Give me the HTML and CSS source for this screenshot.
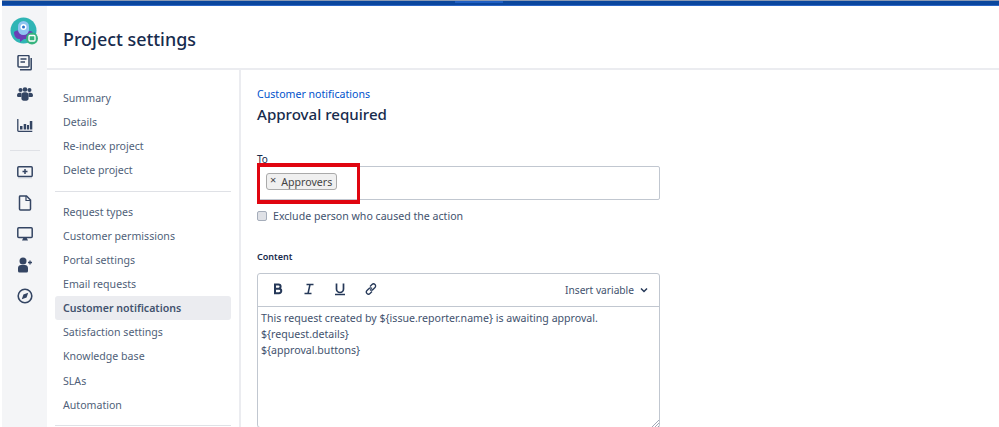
FILE: index.html
```
<!DOCTYPE html>
<html lang="en">
<head>
<meta charset="utf-8">
<title>Project settings</title>
<link rel="stylesheet" href="styles.css">
</head>
<body>
<div class="topbar"><div class="topbar-tab"></div></div>
<div class="app">
  <aside class="rail">
    <div class="logo">
      <svg width="30" height="30" viewBox="0 0 30 30">
        <circle cx="13.500" cy="13.500" r="13" fill="#2fb5b5"/>
        <path d="M4 15c3-2 5-1.500 7-1h9c2 0 3 1 3 3v2c0 2-1 3-3 3h-6l-4 3v-3H9c-3 0-5-3-5-7z" fill="#6a3fb5"/>
        <rect x="8" y="4" width="11" height="14" rx="5.500" fill="#8fc4f2"/>
        <circle cx="13.500" cy="10" r="3" fill="#fff"/>
        <circle cx="13.500" cy="10" r="1.500" fill="#2a6fc9"/>
        <circle cx="22" cy="21.500" r="6" fill="#36b37e"/>
        <rect x="19" y="18.500" width="6" height="5.500" rx="1" fill="none" stroke="#fff" stroke-width="1.300"/>
      </svg>
    </div>
    <div class="rail-group">
      <svg class="ico" viewBox="0 0 16 16"><path d="M1 1.500a1 1 0 0 1 1-1h9a1 1 0 0 1 1 1v9.500a1 1 0 0 1-1 1H2a1 1 0 0 1-1-1z" fill="none" stroke="#344563" stroke-width="1.500"/><path d="M3.500 4h6M3.500 7h4.500" stroke="#344563" stroke-width="1.500"/><path d="M14.200 3v11a.8.8 0 0 1-.8.8H3" fill="none" stroke="#344563" stroke-width="1.500"/></svg>
      <svg class="ico" viewBox="0 0 18 16"><circle cx="4" cy="3.500" r="2.300" fill="#344563"/><circle cx="14" cy="3.500" r="2.300" fill="#344563"/><circle cx="9" cy="3" r="2.600" fill="#344563"/><path d="M0 9.500c0-2.200 1.500-3 3-3h2v5H1.500C.5 11.500 0 10.800 0 9.500zM18 9.500c0-2.200-1.500-3-3-3h-2v5h3.500c1 0 1.500-.7 1.500-2z" fill="#344563"/><path d="M5 9c0-2 1.500-3 3-3h2c1.500 0 3 1 3 3v4c0 1.500-1 2.500-2.500 2.500h-3C6 15.500 5 14.500 5 13z" fill="#344563"/></svg>
      <svg class="ico" viewBox="0 0 16 16"><path d="M.8 2v11.500a.8.8 0 0 0 .8.800h13.700" fill="none" stroke="#344563" stroke-width="1.300"/><rect x="3" y="9" width="2.500" height="3.500" fill="#344563"/><rect x="6.700" y="7" width="2.500" height="5.500" fill="#344563"/><rect x="10" y="8" width="2" height="4.500" fill="#344563"/><rect x="12.800" y="4" width="2.500" height="8.500" fill="#344563"/></svg>
    </div>
    <hr class="rail-rule">
    <div class="rail-group second">
      <svg class="ico" viewBox="0 0 16 16"><rect x=".8" y="2.800" width="14.400" height="9.700" rx="1" fill="none" stroke="#344563" stroke-width="1.500"/><path d="M8 5v5M5.500 7.500h5" stroke="#344563" stroke-width="1.500"/><path d="M1 13.800h14" stroke="#c1c7d0"/></svg>
      <svg class="ico" viewBox="0 0 16 16"><path d="M3 1h6.500L13.500 5v9a1 1 0 0 1-1 1h-9a1 1 0 0 1-1-1V2a1 1 0 0 1 .500-1z" fill="none" stroke="#344563" stroke-width="1.500"/><path d="M9 1v4.500h4.500" fill="none" stroke="#344563" stroke-width="1.200"/></svg>
      <svg class="ico" viewBox="0 0 16 16"><rect x=".8" y="1.800" width="14.400" height="9.700" rx="1" fill="none" stroke="#344563" stroke-width="1.500"/><path d="M6.500 11.500h3l1.500 3H5z" fill="#344563"/></svg>
      <svg class="ico" viewBox="0 0 16 16"><circle cx="6" cy="4" r="3.500" fill="#344563"/><path d="M1 11c0-2 1.500-3 3-3h4c1.500 0 3 1 3 3v3a1.500 1.500 0 0 1-1.500 1.500h-7A1.500 1.500 0 0 1 1 14z" fill="#344563"/><path d="M13 3.500v4M11 5.500h4" stroke="#344563" stroke-width="1.300"/></svg>
      <svg class="ico" viewBox="0 0 16 16"><circle cx="8" cy="8" r="6.800" fill="none" stroke="#344563" stroke-width="1.600"/><path d="M11.200 4.800l-1.600 4.800-4.800 1.600 1.600-4.800z" fill="#344563"/></svg>
    </div>
  </aside>
  <div class="page">
    <header class="page-header"><h1 class="page-title">Project settings</h1></header>
    <div class="columns">
      <nav class="side-nav">
        <div class="nav-group">
          <a class="nav-item">Summary</a>
          <a class="nav-item">Details</a>
          <a class="nav-item">Re-index project</a>
          <a class="nav-item">Delete project</a>
        </div>
        <div class="nav-group">
          <a class="nav-item">Request types</a>
          <a class="nav-item">Customer permissions</a>
          <a class="nav-item">Portal settings</a>
          <a class="nav-item">Email requests</a>
          <a class="nav-item active">Customer notifications</a>
          <a class="nav-item">Satisfaction settings</a>
          <a class="nav-item">Knowledge base</a>
          <a class="nav-item">SLAs</a>
          <a class="nav-item">Automation</a>
        </div>
      </nav>
      <main class="content">
        <a class="crumb">Customer notifications</a>
        <h2 class="content-title">Approval required</h2>
        <label class="field-label to-label">To</label>
        <div class="to-field">
          <span class="tag"><span class="tag-x">×</span>Approvers</span>
          <div class="highlight"></div>
        </div>
        <label class="check-row"><span class="check"></span>Exclude person who caused the action</label>
        <div class="field-label bold">Content</div>
        <div class="editor">
          <div class="toolbar">
            <svg class="tool" viewBox="0 0 12 14"><path d="M3 2.500h3.500a2 2 0 0 1 0 4.200H3zM3 6.700h4a2.200 2.200 0 0 1 0 4.500H3z" fill="none" stroke="#253858" stroke-width="2"/></svg>
            <svg class="tool" viewBox="0 0 12 14"><path d="M3.500 2.500h7M1.500 11.500h7M7 2.500l-2 9" fill="none" stroke="#253858" stroke-width="1.500"/></svg>
            <svg class="tool" viewBox="0 0 12 14"><path d="M2.500 1.500v5.500a3.500 3.500 0 0 0 7 0V1.500" fill="none" stroke="#253858" stroke-width="1.700"/><path d="M1 12.500h10" stroke="#253858" stroke-width="1.500"/></svg>
            <svg class="tool" viewBox="0 0 12 14"><path d="M5 4.500l2-2a2 2 0 0 1 3 3l-2 2a2 2 0 0 1-3 0M7 9.500l-2 2a2 2 0 0 1-3-3l2-2a2 2 0 0 1 3 0" fill="none" stroke="#253858" stroke-width="1.300"/></svg>
            <span class="insert">Insert variable<svg class="chev" viewBox="0 0 8 6"><path d="M1 1.500l3 3 3-3" fill="none" stroke="#253858" stroke-width="1.500"/></svg></span>
          </div>
          <div class="body">
            <div>This request created by ${issue.reporter.name} is awaiting approval.</div>
            <div>${request.details}</div>
            <div>${approval.buttons}</div>
            <svg class="grip" viewBox="0 0 8 8"><path d="M8 1L1 8M8 4L4 8M8 7L7 8" stroke="#8993a4" stroke-width=".8"/></svg>
          </div>
        </div>
      </main>
    </div>
  </div>
</div>
</body>
</html>
```
FILE: styles.css
```
* { box-sizing: border-box; }
html, body { margin: 0; height: 427px; overflow: hidden; background: #fff; }
body {
  font-family: "Noto Sans", "Open Sans", sans-serif;
  font-size: 10.600px;
  color: #42526e;
}
.topbar { height: 6px; margin-left: 2px; background: #0b479e; border-top: 1px solid #8a9ab5; border-bottom: 1px solid #2c66c5; position: relative; }
.topbar-tab { position: absolute; left: 453px; top: 0; width: 48px; height: 2px; background: #1f5fc4; }
.app { display: flex; height: 421px; padding-left: 2px; }
.rail { width: 45px; flex: none; background: #f4f5f7; display: flex; flex-direction: column; align-items: center; padding-top: 11px; }
.logo { height: 30px; width: 30px; margin-left: 1px; }
.logo svg { display: block; }
.rail-group { display: flex; flex-direction: column; align-items: center; gap: 15px; margin-top: 8px; }
.rail-group.second { gap: 15px; margin-top: 13px; }
.ico { width: 16px; height: 16px; display: block; }
.rail-rule { width: 30px; border: 0; border-top: 1px solid #dfe1e6; margin: 17px 0 0; }
.page { flex: 1; display: flex; flex-direction: column; min-width: 0; }
.page-header { height: 64px; border-bottom: 2px solid #ebecf0; padding: 20px 0 0 16px; }
.page-title { margin: 0; font-size: 17.900px; line-height: 26px; font-weight: 500; color: #172b4d; }
.columns { display: flex; flex: 1; min-height: 0; }
.side-nav { width: 194px; flex: none; border-right: 2px solid #ebecf0; padding: 16px 8px 0; }
.nav-group { padding-bottom: 8px; margin-bottom: 8px; border-bottom: 1px solid #dfe1e6; }
.nav-item { display: block; height: 24.150px; line-height: 24px; padding-left: 8px; border-radius: 3px; color: #505f79; white-space: nowrap; }
.nav-item.active { background: #ebecf0; font-weight: 600; color: #42526e; }
.content { flex: 1; padding: 16px 0 0 16px; min-width: 0; }
.crumb { display: block; color: #0052cc; line-height: 16px; }
.content-title { margin: 2px 0 0; font-size: 15.100px; line-height: 21px; font-weight: 500; color: #172b4d; }
.field-label { display: block; color: #172b4d; }
.to-label { font-size: 10px; line-height: 12px; margin-top: 28px; }
.to-field { position: relative; width: 403px; height: 34px; border: 1px solid #c1c7d0; border-radius: 2px; margin-top: 1px; padding: 6px 8px; }
.tag { display: inline-flex; align-items: center; height: 17px; padding: 0 4px 0 3px; background: #f0f0f0; border: 1px solid #aaa; border-radius: 3px; color: #444; font-size: 10.600px; }
.tag-x { margin-right: 5px; font-size: 11px; line-height: 11px; position: relative; top: -2px; }
.highlight { position: absolute; left: -1px; top: -4px; width: 103px; height: 41px; border-style: solid; border-color: #e00510; border-width: 4px 3px; pointer-events: none; }
.check-row { display: flex; align-items: center; margin-top: 9px; height: 14px; color: #42526e; }
.check { width: 10px; height: 10px; margin-right: 6px; background: #dfe1e6; border: 1px solid #a5adba; border-radius: 2px; }
.bold { font-weight: 600; font-size: 9px; line-height: 12px; margin-top: 28px; }
.editor { width: 403px; height: 155px; margin-top: 10px; border: 1px solid #c1c7d0; border-radius: 3px; display: flex; flex-direction: column; }
.toolbar { height: 33px; flex: none; border-bottom: 1px solid #c1c7d0; display: flex; align-items: center; padding-left: 14px; gap: 19px; padding-right: 11px; }
.tool { width: 12px; height: 14px; display: block; margin-top: -3px; }
.insert { margin-left: auto; display: inline-flex; align-items: center; gap: 6px; font-size: 10.200px; }
.chev { width: 8px; height: 6px; display: block; }
.body { flex: 1; position: relative; padding: 3px 3px 0; line-height: 16px; color: #42526e; }
.grip { position: absolute; right: 0; bottom: 0; width: 8px; height: 8px; display: block; }
```
